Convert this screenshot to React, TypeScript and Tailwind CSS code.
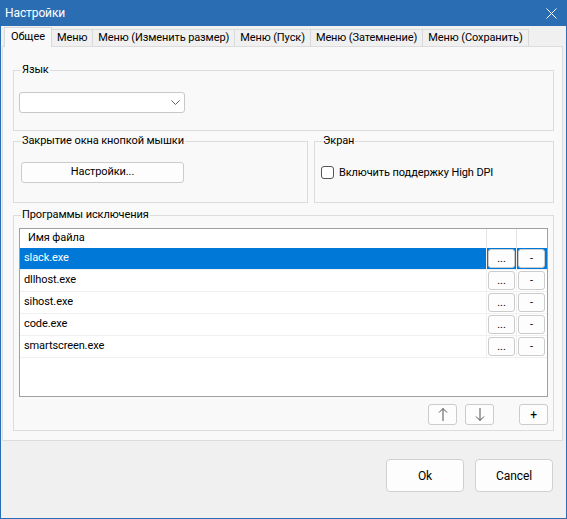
import React from 'react';

const tabs = ['Меню', 'Меню (Изменить размер)', 'Меню (Пуск)', 'Меню (Затемнение)', 'Меню (Сохранить)'];
const files = ['slack.exe', 'dllhost.exe', 'sihost.exe', 'code.exe', 'smartscreen.exe'];

function CellButton({ label }: { label: string }) {
  return (
    <div className="ml-px mt-px h-[19px] w-[27px] rounded-[3px] border border-[#cccccc] bg-[#fdfdfd] flex items-center justify-center text-[11px] leading-none text-black">
      {label}
    </div>
  );
}

function Arrow({ down }: { down?: boolean }) {
  return (
    <svg width="12" height="15" viewBox="0 0 12 15" className={down ? 'rotate-180' : ''}>
      <path d="M6 1.5V14M2 5.5L6 1.5L10 5.5" fill="none" stroke="#505050" strokeWidth="1" />
    </svg>
  );
}

export default function App() {
  return (
    <div className="w-[567px] h-[519px] bg-[#2b6db2] flex flex-col px-px pb-px font-['Roboto','Liberation_Sans',Arial,sans-serif] text-[11px] tracking-[-0.1px] text-black">
      {/* title bar */}
      <div className="h-[26px] shrink-0 flex items-center pl-[4px] pr-[9px] text-white">
        <span className="flex-1 text-[12px] leading-[14px]">Настройки</span>
        <svg width="11" height="11" viewBox="0 0 11 11">
          <path d="M0.5 0.5L10.5 10.5M10.5 0.5L0.5 10.5" stroke="#ffffff" strokeWidth="1" />
        </svg>
      </div>

      <div className="flex-1 bg-[#f0f0f0] flex flex-col">
        {/* tabs */}
        <div className="h-[19px] mt-px pl-[3px] flex items-end whitespace-nowrap">
          <div className="relative z-10 shrink-0 h-[20px] -mb-px px-[6px] flex items-center border-l border-t border-r border-[#d9d9d9] bg-[#f9f9f9]">
            Общее
          </div>
          {tabs.map((t) => (
            <div key={t} className="-ml-px shrink-0 h-[17px] px-[5px] pt-px flex items-center border-l border-t border-r border-[#d9d9d9] bg-[#f0f0f0] first:ml-0">
              {t}
            </div>
          ))}
        </div>

        {/* tab page */}
        <div className="ml-px w-[561px] h-[395px] border border-[#dcdcdc] bg-[#f9f9f9] pt-[16px] pl-[10px] pr-[8px] flex flex-col">
          <fieldset className="border border-[#dcdcdc] px-[5px] pb-[17px]">
            <legend className="ml-[2px] px-px leading-[14px]">Язык</legend>
            <div className="mt-[15px] w-[166px] h-[21px] rounded-[3px] border border-[#c8c8c8] bg-white flex items-center justify-end pr-[4px]">
              <svg width="9" height="5" viewBox="0 0 9 5">
                <path d="M0.5 0.5L4.5 4.5L8.5 0.5" fill="none" stroke="#606060" strokeWidth="1" />
              </svg>
            </div>
          </fieldset>

          <div className="mt-[3px] flex gap-[6px]">
            <fieldset className="w-[295px] border border-[#dcdcdc] px-[5px] pb-[19px]">
              <legend className="ml-[2px] px-px leading-[14px]">Закрытие окна кнопкой мышки</legend>
              <div className="mt-[14px] ml-[2px] w-[163px] h-[21px] rounded-[3px] border border-[#cccccc] bg-[#fdfdfd] flex items-center justify-center">
                Настройки...
              </div>
            </fieldset>
            <fieldset className="flex-1 border border-[#dcdcdc] px-[5px]">
              <legend className="ml-[2px] px-px leading-[14px]">Экран</legend>
              <div className="mt-[18px] ml-px flex items-center gap-[5px] h-[13px]">
                <div className="w-[13px] h-[13px] rounded-[3px] border border-[#555555] bg-white" />
                <span className="leading-[13px]">Включить поддержку High DPI</span>
              </div>
            </fieldset>
          </div>

          <fieldset className="mt-[5px] border border-[#dcdcdc] px-[5px] pb-[5px]">
            <legend className="ml-[2px] px-px leading-[14px]">Программы исключения</legend>
            <div className="mt-[6px] h-[169px] border border-[#a0a0a0] bg-white flex flex-col">
              <div className="h-[19px] flex">
                <div className="flex-1 border-r border-[#e5e5e5] pl-[8px] flex items-center">Имя файла</div>
                <div className="w-[30px] border-r border-[#e5e5e5]" />
                <div className="w-[30px]" />
              </div>
              {files.map((f, i) => (
                <div
                  key={f}
                  className={
                    i === 0
                      ? 'h-[22px] flex border-b border-[#f0f0f0] bg-[#0078d7] text-white'
                      : 'h-[22px] flex border-b border-[#f0f0f0]'
                  }
                >
                  <div className="flex-1 border-r border-[#f0f0f0] pl-[4px] flex items-center">{f}</div>
                  <div className="w-[30px] border-r border-[#f0f0f0]">
                    <CellButton label="..." />
                  </div>
                  <div className="w-[30px]">
                    <CellButton label="-" />
                  </div>
                </div>
              ))}
            </div>
            <div className="mt-[7px] flex justify-end">
              <div className="w-[29px] h-[21px] rounded-[3px] border border-[#cccccc] bg-[#fdfdfd] flex items-center justify-center">
                <Arrow />
              </div>
              <div className="ml-[8px] w-[29px] h-[21px] rounded-[3px] border border-[#cccccc] bg-[#fdfdfd] flex items-center justify-center">
                <Arrow down />
              </div>
              <div className="ml-[25px] w-[29px] h-[21px] rounded-[3px] border border-[#cccccc] bg-[#fdfdfd] flex items-center justify-center text-[12px] leading-none">
                +
              </div>
            </div>
          </fieldset>
        </div>

        {/* footer */}
        <div className="flex-1 flex justify-end items-start pt-[18px] pr-[13px] gap-[11px]">
          <div className="w-[78px] h-[33px] rounded-[4px] border border-[#d0d0d0] bg-[#fdfdfd] flex items-center justify-center text-[12px]">
            Ok
          </div>
          <div className="w-[78px] h-[33px] rounded-[4px] border border-[#d0d0d0] bg-[#fdfdfd] flex items-center justify-center text-[12px]">
            Cancel
          </div>
        </div>
      </div>
    </div>
  );
}
